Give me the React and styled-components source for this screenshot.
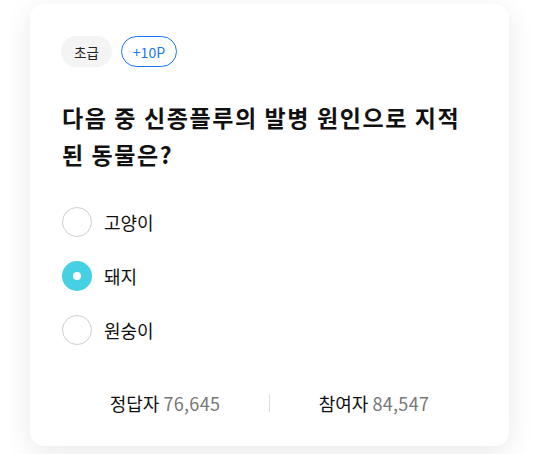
import React, { useState } from "react";
import styled, { createGlobalStyle } from "styled-components";

const GlobalStyle = createGlobalStyle`
  html, body {
    margin: 0;
    padding: 0;
    background: #ffffff;
    font-family: "Noto Sans CJK KR", "Noto Sans", sans-serif;
  }
`;

const Page = styled.div`
  width: 540px;
  height: 454px;
  padding: 4px 31px 0 30px;
  box-sizing: border-box;
  overflow: hidden;
`;

const Card = styled.div`
  background: #fff;
  border-radius: 14px;
  box-shadow: 0 6px 28px rgba(0, 0, 0, 0.09);
  padding: 32px 34px 31px 31px;
  height: 442px;
  box-sizing: border-box;
  display: flex;
  flex-direction: column;
`;

const Tags = styled.div`
  display: flex;
  gap: 9px;
`;

const Tag = styled.span`
  height: 31px;
  box-sizing: border-box;
  padding: 0 ${(p) => (p.$outline ? "11px" : "13px")};
  border-radius: 16px;
  display: inline-flex;
  align-items: center;
  font-size: ${(p) => (p.$outline ? "14px" : "13.5px")};
  color: ${(p) => (p.$outline ? "#1877ff" : "#222")};
  background: ${(p) => (p.$outline ? "#fff" : "#f4f4f4")};
  border: ${(p) => (p.$outline ? "1px solid #1877ff" : "none")};
`;

const Question = styled.h2`
  margin: 32px 0 0 1px;
  font-size: 23px;
  line-height: 37px;
  font-weight: 700;
  color: #111;
  letter-spacing: 1.6px;
`;

const Options = styled.div`
  margin-top: 34px;
  display: flex;
  flex-direction: column;
  gap: 24px;
`;

const Option = styled.label`
  display: flex;
  align-items: center;
  gap: 12px;
  height: 30px;
  cursor: pointer;
  font-size: 18px;
  color: #111;
  margin-left: 1px;
`;

const Radio = styled.span`
  width: 30px;
  height: 30px;
  border-radius: 50%;
  box-sizing: border-box;
  border: ${(p) => (p.$checked ? "none" : "1.5px solid #cfcfcf")};
  background: ${(p) => (p.$checked ? "#45d0e3" : "#fff")};
  display: flex;
  align-items: center;
  justify-content: center;

  &::after {
    content: "";
    display: ${(p) => (p.$checked ? "block" : "none")};
    width: 8px;
    height: 8px;
    border-radius: 50%;
    background: #fff;
  }
`;

const Stats = styled.div`
  margin-top: auto;
  display: flex;
  align-items: center;
  margin-right: -3px;
`;

const Stat = styled.div`
  flex: 1;
  text-align: center;
  font-size: 18px;
  line-height: 24px;
  color: #111;

  span {
    color: #777;
    letter-spacing: 0.3px;
  }
`;

const Divider = styled.div`
  width: 1px;
  height: 18px;
  background: #ddd;
`;

const options = ["고양이", "돼지", "원숭이"];

export default function App() {
  const [selected, setSelected] = useState(1);
  return (
    <>
      <GlobalStyle />
      <Page>
        <Card>
          <Tags>
            <Tag>초급</Tag>
            <Tag $outline>+10P</Tag>
          </Tags>
          <Question>다음 중 신종플루의 발병 원인으로 지적된 동물은?</Question>
          <Options>
            {options.map((o, i) => (
              <Option key={o} onClick={() => setSelected(i)}>
                <Radio $checked={selected === i} />
                {o}
              </Option>
            ))}
          </Options>
          <Stats>
            <Stat>
              정답자 <span>76,645</span>
            </Stat>
            <Divider />
            <Stat>
              참여자 <span>84,547</span>
            </Stat>
          </Stats>
        </Card>
      </Page>
    </>
  );
}
